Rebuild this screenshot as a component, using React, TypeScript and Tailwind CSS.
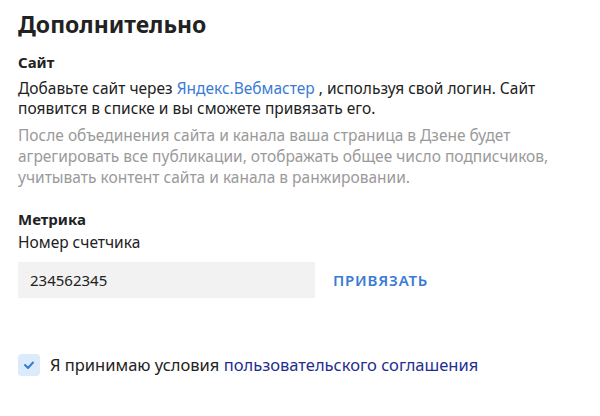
import React from "react";

export default function App() {
  return (
    <div className="w-[600px] h-[416px] bg-white text-[#000000] px-[18px] pt-[8px]" style={{ fontFamily: '"Noto Sans", Arial, sans-serif' }}>
      <h1 className="text-[23px] leading-[32px] font-bold text-[#222]">Дополнительно</h1>
      <h2 className="mt-[12px] text-[15px] leading-[20px] font-bold text-[#222]">Сайт</h2>
      <p className="mt-[6px] text-[15.5px] leading-[20px] text-[#222] w-[560px]">
        Добавьте сайт через <span className="text-[#3a7bd5]">Яндекс.Вебмастер</span> , используя свой логин. Сайт появится в списке и вы сможете привязать его.
      </p>
      <p className="mt-[7px] text-[15.5px] leading-[21px] text-[#9a9a9a] w-[560px]">
        После объединения сайта и канала ваша страница в Дзене будет агрегировать все публикации, отображать общее число подписчиков, учитывать контент сайта и канала в ранжировании.
      </p>
      <h2 className="mt-[21px] text-[15px] leading-[20px] font-bold text-[#222]">Метрика</h2>
      <div className="mt-[3px] text-[15.5px] leading-[20px] text-[#222]">Номер счетчика</div>
      <div className="mt-[10px] flex items-center">
        <div className="w-[297px] h-[36px] bg-[#f2f2f2] flex items-center pl-[12px] text-[15px] text-[#222]">234562345</div>
        <button className="ml-[18px] text-[15px] font-semibold tracking-[0.8px] text-[#3a7bd5]">ПРИВЯЗАТЬ</button>
      </div>
      <div className="mt-[56px] flex items-center">
        <div className="w-[22px] h-[22px] rounded-[4px] bg-[#dcebfc] flex items-center justify-center">
          <svg width="12" height="10" viewBox="0 0 12 10" fill="none">
            <path d="M2 5 L5 8 L10 2.5" stroke="#3a7bd5" strokeWidth="2" strokeLinecap="round" strokeLinejoin="round" />
          </svg>
        </div>
        <span className="ml-[10px] text-[16.5px] leading-[22px] text-[#222]">
          Я принимаю условия <span className="text-[#1f2e8f]">пользовательского соглашения</span>
        </span>
      </div>
    </div>
  );
}
